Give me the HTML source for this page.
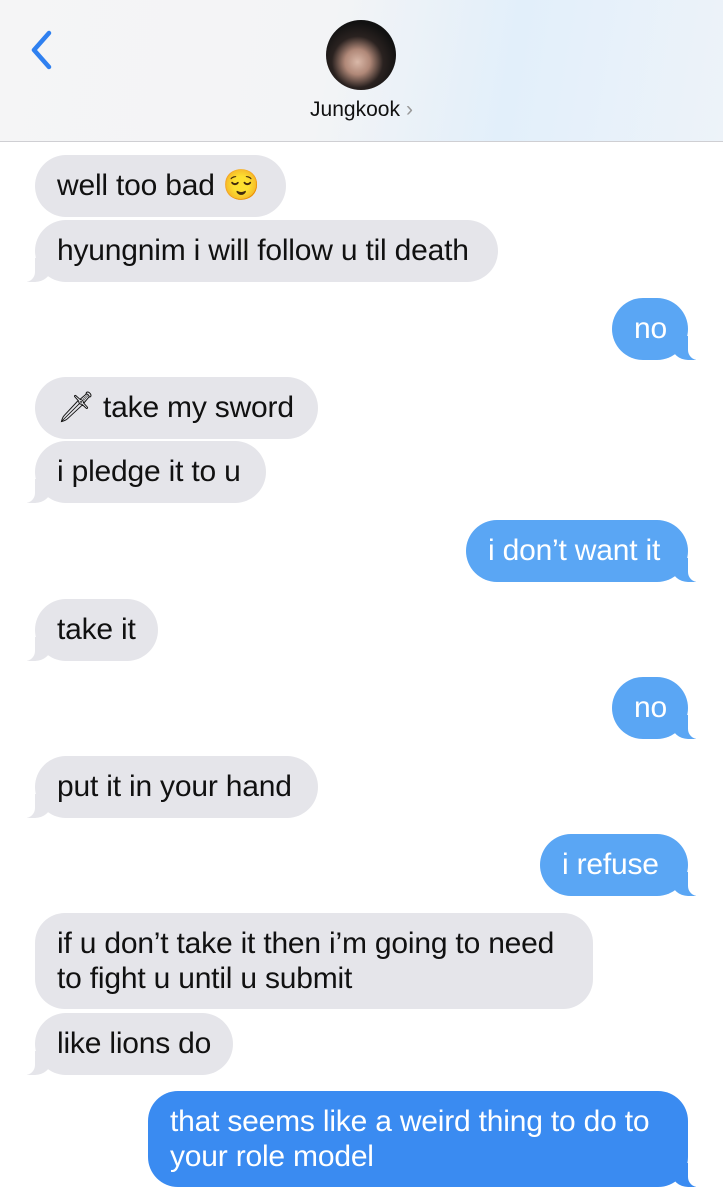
<!DOCTYPE html>
<html><head><meta charset="utf-8"><style>
body{margin:0;width:723px;height:1200px;background:#fff;position:relative;overflow:hidden;font-family:"Liberation Sans",sans-serif;}
.hdr{position:absolute;left:0;top:0;width:723px;height:141px;background:linear-gradient(100deg,#f5f5f6 0%,#f3f4f6 45%,#e2effa 70%,#edf3f9 100%);border-bottom:1px solid #cfcfd3;}
.av{position:absolute;left:326px;top:20px;width:70px;height:70px;border-radius:50%;background:radial-gradient(circle at 45% 60%,#d9b8a8 0,#b08878 22%,#2a2220 45%,#111 70%);}
.name{position:absolute;left:0;width:723px;top:98px;text-align:center;font-size:21px;color:#111;}
.name span{color:#999;margin-left:6px}
.b{position:absolute;height:62px;border-radius:31px;font-size:30px;line-height:62px;padding:0 22px;box-sizing:border-box;white-space:nowrap;color:#111;background:#e5e5ea;letter-spacing:-0.2px}
.l{left:35px}
.r{right:35px;color:#fff;background:#5aa6f4}
.two{line-height:35px;padding-top:13px;height:96px;border-radius:30px}
.tl::before{content:"";position:absolute;left:-8px;bottom:0;width:24px;height:24px;background:#e5e5ea;border-bottom-right-radius:16px 14px;}
.tl::after{content:"";position:absolute;left:-12px;bottom:0;width:12px;height:24px;background:#fff;border-bottom-right-radius:10px;}
.tr::before{content:"";position:absolute;right:-8px;bottom:0;width:24px;height:24px;background:inherit;border-bottom-left-radius:16px 14px;}
.tr::after{content:"";position:absolute;right:-12px;bottom:0;width:12px;height:24px;background:#fff;border-bottom-left-radius:10px;}
</style></head><body>
<div class="hdr">
<svg style="position:absolute;left:26px;top:28px" width="30" height="44" viewBox="0 0 30 44"><path d="M23 5 L8 22 L23 39" stroke="#2f80f0" stroke-width="4.5" fill="none" stroke-linecap="round" stroke-linejoin="round"/></svg>
<div class="av"></div>
<div class="name">Jungkook<span>›</span></div>
</div>
<div class="b l" style="top:155px;width:251px">well too bad 😌</div>
<div class="b l tl" style="top:220px;width:463px">hyungnim i will follow u til death</div>
<div class="b r tr" style="top:298px;width:76px">no</div>
<div class="b l" style="top:377px;width:283px">🗡 take my sword</div>
<div class="b l tl" style="top:441px;width:231px">i pledge it to u</div>
<div class="b r tr" style="top:520px;width:222px">i don’t want it</div>
<div class="b l tl" style="top:599px;width:123px">take it</div>
<div class="b r tr" style="top:677px;width:76px">no</div>
<div class="b l tl" style="top:756px;width:283px">put it in your hand</div>
<div class="b r tr" style="top:834px;width:148px">i refuse</div>
<div class="b l two" style="top:913px;width:558px">if u don’t take it then i’m going to need<br>to fight u until u submit</div>
<div class="b l tl" style="top:1013px;width:198px">like lions do</div>
<div class="b r tr two" style="top:1091px;width:540px;background:#3a8bf1">that seems like a weird thing to do to<br>your role model</div>
</body></html>
